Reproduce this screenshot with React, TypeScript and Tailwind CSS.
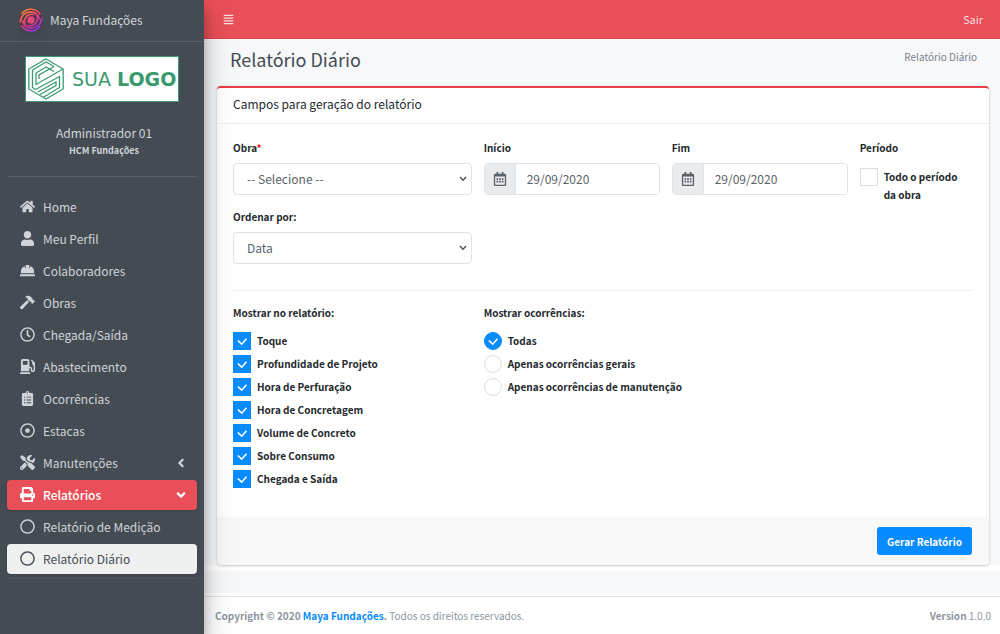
import { useState } from 'react';
import type { ReactNode } from 'react';
import type { IconType } from 'react-icons';
import {
  FaHome,
  FaUser,
  FaHardHat,
  FaHammer,
  FaRegClock,
  FaGasPump,
  FaClipboardList,
  FaRegDotCircle,
  FaTools,
  FaPrint,
  FaRegCircle,
  FaAngleLeft,
  FaAngleDown,
  FaAlignJustify,
  FaRegCalendarAlt,
} from 'react-icons/fa';

type NavItem = { label: string; icon: IconType; state?: 'open' | 'current'; arrow?: IconType };

const navItems: NavItem[] = [
  { label: 'Home', icon: FaHome },
  { label: 'Meu Perfil', icon: FaUser },
  { label: 'Colaboradores', icon: FaHardHat },
  { label: 'Obras', icon: FaHammer },
  { label: 'Chegada/Saída', icon: FaRegClock },
  { label: 'Abastecimento', icon: FaGasPump },
  { label: 'Ocorrências', icon: FaClipboardList },
  { label: 'Estacas', icon: FaRegDotCircle },
  { label: 'Manutenções', icon: FaTools, arrow: FaAngleLeft },
  { label: 'Relatórios', icon: FaPrint, state: 'open', arrow: FaAngleDown },
  { label: 'Relatório de Medição', icon: FaRegCircle },
  { label: 'Relatório Diário', icon: FaRegCircle, state: 'current' },
];

const reportFields = [
  'Toque',
  'Profundidade de Projeto',
  'Hora de Perfuração',
  'Hora de Concretagem',
  'Volume de Concreto',
  'Sobre Consumo',
  'Chegada e Saída',
];

const occurrenceOptions = ['Todas', 'Apenas ocorrências gerais', 'Apenas ocorrências de manutenção'];

function BrandMark() {
  return (
    <svg viewBox="0 0 24 24" className="size-6 rounded-full shadow-lg" fill="none" strokeLinecap="round">
      <defs>
        <linearGradient id="swirl" x1="4" y1="2" x2="18" y2="23" gradientUnits="userSpaceOnUse">
          <stop offset="0" stopColor="#f08a2c" />
          <stop offset="0.5" stopColor="#e23d7c" />
          <stop offset="1" stopColor="#8a35e8" />
        </linearGradient>
      </defs>
      <circle cx="12" cy="12" r="12" fill="#4a3547" />
      <g stroke="url(#swirl)" strokeWidth="1.7">
        <path d="M3 5.500A11 11 0 0 1 21 6" />
        <path d="M21 18.500A11 11 0 0 1 3 18" />
        <path d="M1.300 14A10.500 10.500 0 0 1 12 3.800 8.500 8.500 0 0 1 20.300 11" />
        <path d="M22.700 10A10.500 10.500 0 0 1 12 20.200 8.500 8.500 0 0 1 3.700 13" />
        <path d="M6 16A7.300 7.300 0 0 1 15 6.500" />
        <path d="M18 8A7.300 7.300 0 0 1 9 17.500" />
      </g>
      <circle cx="12" cy="12" r="3.800" fill="#e8467a" />
    </svg>
  );
}

function CompanyLogo() {
  return (
    <div className="flex h-[46px] w-[154px] items-center border border-[#3a9a6e] bg-white pl-[2px] text-[#3a9a6e]">
      <svg viewBox="0 0 36 42" className="h-[42px] w-9 shrink-0" fill="none" stroke="currentColor" strokeWidth="1.300">
        <path d="M18 1 35.200 11V31L18 41 .8 31V11Z" />
        <path d="M35 11 8 26.500V15L18 9 26 13.500" />
        <path d="M26 8.500 18 4 4.500 12V29.500L7.500 31.500" />
        <path d="M26 8.500 11 17V21" />
        <path d="M7.500 31.500 31.500 18.500V29.500L15 39.500" />
        <path d="M10 34 28 24V27.500L12 36.500" />
      </svg>
      <span className="ml-2 whitespace-nowrap font-['DejaVu_Sans',sans-serif] text-[19px] leading-none">
        SUA <b>LOGO</b>
      </span>
    </div>
  );
}

function Sidebar() {
  return (
    <aside className="relative z-10 w-[204px] shrink-0 bg-[#444b52] text-[#d0d4da] shadow-[0_14px_28px_rgba(0,0,0,0.25),0_10px_10px_rgba(0,0,0,0.22)]">
      <a
        href="#"
        className="flex h-[42px] items-center gap-[7px] border-b border-[#59616a] pb-[2px] pl-[19px] text-[12px]"
      >
        <BrandMark />
        Maya Fundações
      </a>
      <div className="px-[7px]">
        <div className="flex h-[135px] flex-col items-center border-b border-[#59616a] pt-[14px]">
          <CompanyLogo />
          <div className="mt-[22px] pl-1 text-center">
            <div className="text-[12px] leading-[18px]">Administrador 01</div>
            <div className="text-[9px] leading-[17px] font-bold">HCM Fundações</div>
          </div>
        </div>
        <nav className="mt-[15px] flex flex-col gap-[2px] border-b border-[#4f5860] pb-1 text-[12px]">
          {navItems.map(({ label, icon: Icon, state, arrow: Arrow }) => (
            <a
              key={label}
              href="#"
              className={
                'flex h-[30px] items-center rounded pr-[9px] pb-px pl-[13px] ' +
                (state === 'open'
                  ? 'bg-[#e94f58] font-medium text-white shadow'
                  : state === 'current'
                    ? 'bg-[#eff0f0] text-[#444b52] shadow'
                    : '')
              }
            >
              <Icon className="size-[15px] shrink-0" />
              <span className="ml-2 flex-1">{label}</span>
              {Arrow && <Arrow className="size-[14px] shrink-0" />}
            </a>
          ))}
        </nav>
      </div>
    </aside>
  );
}

function FieldLabel({ htmlFor, children }: { htmlFor: string; children: ReactNode }) {
  return (
    <label htmlFor={htmlFor} className="mb-[6px] block text-[10px] leading-[18px] font-bold">
      {children}
    </label>
  );
}

function SelectField({ id, label, options }: { id: string; label: ReactNode; options: string[] }) {
  return (
    <div className="col-span-4">
      <FieldLabel htmlFor={id}>{label}</FieldLabel>
      <div className="grid items-center">
        <select
          id={id}
          className="col-start-1 row-start-1 h-8 w-full appearance-none rounded border border-[#dfe3e8] bg-white px-[13px] pb-px text-[12px] text-[#5a626a]"
        >
          {options.map((option) => (
            <option key={option}>{option}</option>
          ))}
        </select>
        <svg
          viewBox="0 0 8 6"
          className="pointer-events-none col-start-1 row-start-1 mr-[5px] h-[6px] w-2 justify-self-end"
          fill="none"
          stroke="#4a5056"
          strokeWidth="1.400"
        >
          <path d="M1 1 4 4.300 7 1" />
        </svg>
      </div>
    </div>
  );
}

function DateField({ id, label }: { id: string; label: string }) {
  return (
    <div className="col-span-3">
      <FieldLabel htmlFor={id}>{label}</FieldLabel>
      <div className="flex h-8 overflow-hidden rounded border border-[#dfe3e8]">
        <span className="flex w-[31px] shrink-0 items-center justify-center border-r border-[#dfe3e8] bg-[#e9ecef] text-[#5a626a]">
          <FaRegCalendarAlt className="size-[14px]" />
        </span>
        <input
          id={id}
          type="text"
          defaultValue="29/09/2020"
          className="w-full min-w-0 bg-white px-[11px] pb-px text-[12px] text-[#5a626a]"
        />
      </div>
    </div>
  );
}

type ChoiceProps = {
  type: 'checkbox' | 'radio';
  name: string;
  label: string;
  checked: boolean;
  onChange: () => void;
};

function Choice({ type, name, label, checked, onChange }: ChoiceProps) {
  return (
    <label className="flex items-start gap-[6px] text-[10px] leading-[18px] font-bold">
      <span className="grid shrink-0">
        <input
          type={type}
          name={name}
          checked={checked}
          onChange={onChange}
          className={
            'peer col-start-1 row-start-1 size-[18px] appearance-none border border-[#dededc] bg-white checked:border-[#078bff] checked:bg-[#078bff] ' +
            (type === 'radio' ? 'rounded-full' : '')
          }
        />
        <svg
          viewBox="0 0 18 18"
          className="pointer-events-none col-start-1 row-start-1 hidden size-[18px] peer-checked:block"
          fill="none"
          stroke="white"
          strokeWidth="1.600"
        >
          <path d="M4.800 8.500 8.700 12.200 13.500 6.800" />
        </svg>
      </span>
      <span>{label}</span>
    </label>
  );
}

export default function App() {
  const [wholePeriod, setWholePeriod] = useState(false);
  const [shown, setShown] = useState<string[]>(reportFields);
  const [occurrence, setOccurrence] = useState(occurrenceOptions[0]);

  const toggle = (field: string) =>
    setShown((list) => (list.includes(field) ? list.filter((f) => f !== field) : [...list, field]));

  return (
    <div className="flex min-h-screen bg-[#f6f8fa] font-['Noto_Sans_CJK_SC',sans-serif] text-[#24292e]">
      <Sidebar />
      <div className="flex min-w-0 flex-1 flex-col">
        <header className="flex h-[39px] items-center justify-between border-b border-[#dc4650] bg-[#e94f58] pr-[17px] pl-[19px] text-[11px] text-[#fbdcde]">
          <button type="button" aria-label="Menu">
            <FaAlignJustify className="size-[11px]" />
          </button>
          <a href="#">Sair</a>
        </header>

        <main className="flex-1">
          <div className="flex h-[47px] items-start justify-between pt-[7px] pr-[23px] pl-[26px]">
            <h1 className="text-[18px] leading-[26px] text-[#444c53]">Relatório Diário</h1>
            <span className="text-[10px] leading-[22px] text-[#7a848d]">Relatório Diário</span>
          </div>

          <form
            className="relative mr-[11px] ml-[13px] rounded border-t-2 border-[#ea3e48] bg-white shadow-[0_0_1px_rgba(0,0,0,0.2),0_1px_3px_rgba(0,0,0,0.2)]"
            onSubmit={(e) => e.preventDefault()}
          >
            <h2 className="border-b border-[#eeeff0] px-4 pt-[7px] pb-[10px] text-[12px] leading-[18px]">
              Campos para geração do relatório
            </h2>

            <div className="px-4 pt-[15px] pb-[29px]">
              <div className="grid grid-cols-12 gap-x-3 gap-y-1">
                <SelectField
                  id="obra"
                  label={
                    <>
                      Obra<span className="text-[#ff1a1a]">*</span>
                    </>
                  }
                  options={['-- Selecione --']}
                />
                <DateField id="inicio" label="Início" />
                <DateField id="fim" label="Fim" />
                <fieldset className="col-span-2 pr-3">
                  <legend className="mb-[11px] text-[10px] leading-[18px] font-bold">Período</legend>
                  <Choice
                    type="checkbox"
                    name="periodo"
                    label="Todo o período da obra"
                    checked={wholePeriod}
                    onChange={() => setWholePeriod(!wholePeriod)}
                  />
                </fieldset>
                <SelectField id="ordem" label="Ordenar por:" options={['Data']} />
              </div>

              <hr className="mt-[26px] mb-[13px] border-[#eeeff0]" />

              <div className="grid grid-cols-12 gap-x-3">
                <fieldset className="col-span-4">
                  <legend className="mb-[10px] text-[10px] leading-[18px] font-bold">Mostrar no relatório:</legend>
                  <div className="flex flex-col gap-[5px]">
                    {reportFields.map((field) => (
                      <Choice
                        key={field}
                        type="checkbox"
                        name="campos"
                        label={field}
                        checked={shown.includes(field)}
                        onChange={() => toggle(field)}
                      />
                    ))}
                  </div>
                </fieldset>
                <fieldset className="col-span-8">
                  <legend className="mb-[10px] text-[10px] leading-[18px] font-bold">Mostrar ocorrências:</legend>
                  <div className="flex flex-col gap-[5px]">
                    {occurrenceOptions.map((option) => (
                      <Choice
                        key={option}
                        type="radio"
                        name="ocorrencias"
                        label={option}
                        checked={occurrence === option}
                        onChange={() => setOccurrence(option)}
                      />
                    ))}
                  </div>
                </fieldset>
              </div>
            </div>

            <div className="flex justify-end rounded-b bg-[#f8f8f8] px-[17px] py-[10px]">
              <button
                type="submit"
                className="h-7 rounded-[3px] bg-[#078bff] px-[10px] text-[10px] font-bold text-white"
              >
                Gerar Relatório
              </button>
            </div>
          </form>
          <div className="h-[5px] bg-white" />
        </main>

        <div className="h-[3px] bg-white" />
        <footer className="flex h-[38px] items-center justify-between border-t border-[#e3e6ea] bg-white pr-[9px] pl-[11px] text-[10px] text-[#8d969e]">
          <span>
            <b>
              Copyright © 2020{' '}
              <a href="#" className="text-[#078bff]">
                Maya Fundações
              </a>
              .
            </b>{' '}
            Todos os direitos reservados.
          </span>
          <span>
            <b>Version</b> 1.0.0
          </span>
        </footer>
      </div>
    </div>
  );
}
